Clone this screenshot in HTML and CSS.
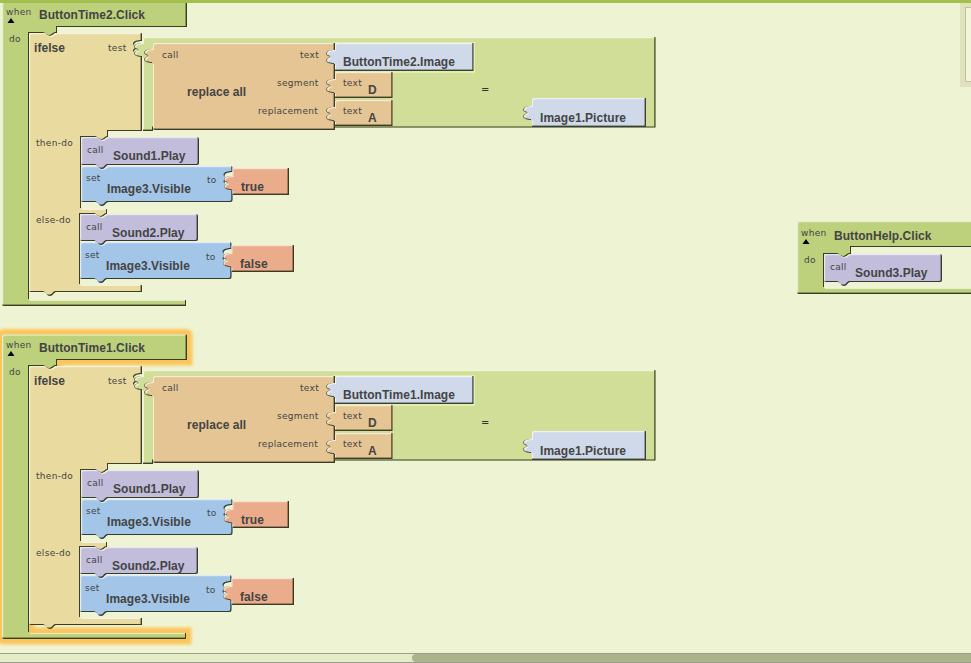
FILE: index.html
```html
<!DOCTYPE html>
<html lang="en">
<head>
<meta charset="utf-8">
<title>Blocks editor</title>
<link rel="stylesheet" href="styles.css">
</head>
<body>
<div class="page">
  <div class="topbar"></div>
  <div class="canvas">
    <svg class="workspace" viewBox="0 3 971 650" xmlns="http://www.w3.org/2000/svg">
      <defs>
        <filter id="bevel" x="-5%" y="-5%" width="110%" height="110%" color-interpolation-filters="sRGB">
          <feOffset in="SourceAlpha" dx="1.2" dy="1.2" result="downRight"/>
          <feComposite in="SourceAlpha" in2="downRight" operator="out" result="topEdge"/>
          <feFlood flood-color="#ffffff" flood-opacity="0.65"/>
          <feComposite in2="topEdge" operator="in" result="light"/>
          <feOffset in="SourceAlpha" dx="-1.4" dy="-1.4" result="upLeft"/>
          <feComposite in="SourceAlpha" in2="upLeft" operator="out" result="bottomEdge"/>
          <feFlood flood-color="#1f2410" flood-opacity="0.85"/>
          <feComposite in2="bottomEdge" operator="in" result="dark"/>
          <feMerge>
            <feMergeNode in="SourceGraphic"/>
            <feMergeNode in="light"/>
            <feMergeNode in="dark"/>
          </feMerge>
        </filter>
        <filter id="glow" x="-10%" y="-10%" width="120%" height="120%">
          <feGaussianBlur stdDeviation="1.6"/>
        </filter>

        <path id="when-outline" d="M2,4 q0,-2.5 2,-2.5 H186 q1,0 1,1 V27 H57 V33 H56 c-2,0 -3,3 -6,3 s-4,-3 -6,-3 H29 V300 H186 V306 H4 q-2,0 -2,-2 Z"/>
        <path id="socket" d="M0,0 v-2 c-3,0 -8,-1 -8,-3.5 c0,-2 2,-2.5 4,-3.5 c-2,-1 -4,-1.5 -4,-3.5 c0,-2.5 5,-3.5 8,-3.5 v-2 Z"/>

        <g id="stack">
          <use href="#when-outline" class="b-when"/>
          <path class="b-if" d="M29,35 q0,-2 2,-2 H44 c2,0 3,3 6,3 s4,-3 6,-3 H141 q1,0 1,1 V39 v2 c-3,0 -8,1 -8,3.5 c0,2 2,2.5 4,3.5 c-2,1 -4,1.5 -4,3.5 c0,2.5 5,3.5 8,3.5 v2 V131 H108 V137 c-2,0 -3,3 -6,3 s-4,-3 -6,-3 H81 V209 H107 V214 c-2,0 -3,3 -6,3 s-4,-3 -6,-3 H80 V285 H142 V292 H56 c-2,0 -3,4 -6,4 s-4,-4 -6,-4 H31 q-2,0 -2,-2 Z"/>
          <use href="#socket" class="socket" transform="translate(142 59)"/>
          <path class="b-eq" d="M145,37 H655.5 V127.5 H153 V131 H143 V59 v-2 c-3,0 -8,-1 -8,-3.5 c0,-2 2,-2.5 4,-3.5 c-2,-1 -4,-1.5 -4,-3.5 c0,-2.5 5,-3.5 8,-3.5 v-2 V39 q0,-2 2,-2 Z"/>
          <rect class="b-socketedge" x="333" y="42" width="142" height="31"/>
          <use href="#socket" class="socket" transform="translate(152 65)"/>
          <path class="b-text" d="M155,43 H335 V130 H155 q-2,0 -2,-2 V65 v-2 c-3,0 -8,-1 -8,-3.5 c0,-2 2,-2.5 4,-3.5 c-2,-1 -4,-1.5 -4,-3.5 c0,-2.5 5,-3.5 8,-3.5 v-2 V45 q0,-2 2,-2 Z"/>
          <use href="#socket" class="socket" transform="translate(334 66)"/>
          <path class="b-prop" d="M337,43 H473.5 V71 H335 V66 v-2 c-3,0 -8,-1 -8,-3.5 c0,-2 2,-2.5 4,-3.5 c-2,-1 -4,-1.5 -4,-3.5 c0,-2.5 5,-3.5 8,-3.5 v-2 V45 q0,-2 2,-2 Z"/>
          <use href="#socket" class="socket" transform="translate(334 95)"/>
          <path class="b-text" d="M337,72 H392.5 V98 H335 V95 v-2 c-3,0 -8,-1 -8,-3.5 c0,-2 2,-2.5 4,-3.5 c-2,-1 -4,-1.5 -4,-3.5 c0,-2.5 5,-3.5 8,-3.5 v-2 V74 q0,-2 2,-2 Z"/>
          <use href="#socket" class="socket" transform="translate(334 123)"/>
          <path class="b-text" d="M337,100 H392.5 V126 H335 V123 v-2 c-3,0 -8,-1 -8,-3.5 c0,-2 2,-2.5 4,-3.5 c-2,-1 -4,-1.5 -4,-3.5 c0,-2.5 5,-3.5 8,-3.5 v-2 V102 q0,-2 2,-2 Z"/>
          <use href="#socket" class="socket" transform="translate(531 122)"/>
          <path class="b-prop" d="M534,98 H646 V127 H532 V122 v-2 c-3,0 -8,-1 -8,-3.5 c0,-2 2,-2.5 4,-3.5 c-2,-1 -4,-1.5 -4,-3.5 c0,-2.5 5,-3.5 8,-3.5 v-2 V100 q0,-2 2,-2 Z"/>

          <path class="b-set" d="M83,166 H96 c2,0 3,3 6,3 s4,-3 6,-3 H230.5 q2,0 2,2 V170 v2 c-3,0 -8,1 -8,3.5 c0,2 2,2.5 4,3.5 c-2,1 -4,1.5 -4,3.5 c0,2.5 5,3.5 8,3.5 v2 V200 q0,2 -2,2 H108 c-2,0 -3,4 -6,4 s-4,-4 -6,-4 H83 q-2,0 -2,-2 V168 q0,-2 2,-2 Z"/>
          <path class="b-call" d="M83,137 H96 c2,0 3,3 6,3 s4,-3 6,-3 H197 q2,0 2,2 V163 q0,2 -2,2 H108 c-2,0 -3,4 -6,4 s-4,-4 -6,-4 H83 q-2,0 -2,-2 V139 q0,-2 2,-2 Z"/>
          <use href="#socket" class="socket" transform="translate(232 192)"/>
          <path class="b-bool" d="M232.5,168 H289 V195 H232.5 V192 v-2 c-3,0 -8,-1 -8,-3.5 c0,-2 2,-2.5 4,-3.5 c-2,-1 -4,-1.5 -4,-3.5 c0,-2.5 5,-3.5 8,-3.5 v-2 Z"/>

          <path class="b-set" d="M82,242 H95 c2,0 3,3 6,3 s4,-3 6,-3 H229.5 q2,0 2,2 V247 v2 c-3,0 -8,1 -8,3.5 c0,2 2,2.5 4,3.5 c-2,1 -4,1.5 -4,3.5 c0,2.5 5,3.5 8,3.5 v2 V277 q0,2 -2,2 H107 c-2,0 -3,4 -6,4 s-4,-4 -6,-4 H82 q-2,0 -2,-2 V244 q0,-2 2,-2 Z"/>
          <path class="b-call" d="M82,214 H95 c2,0 3,3 6,3 s4,-3 6,-3 H196 q2,0 2,2 V239 q0,2 -2,2 H107 c-2,0 -3,4 -6,4 s-4,-4 -6,-4 H82 q-2,0 -2,-2 V216 q0,-2 2,-2 Z"/>
          <use href="#socket" class="socket" transform="translate(231 269)"/>
          <path class="b-bool" d="M231.5,245 H294 V272 H231.5 V269 v-2 c-3,0 -8,-1 -8,-3.5 c0,-2 2,-2.5 4,-3.5 c-2,-1 -4,-1.5 -4,-3.5 c0,-2.5 5,-3.5 8,-3.5 v-2 Z"/>

          <path class="arrow" d="M11,18 L14.5,23 H7.5 Z"/>
        </g>
      </defs>

      <rect class="dock-shadow" x="960" y="3" width="14" height="84"/>
      <rect class="dock" x="965.5" y="7.5" width="10" height="74"/>

      <use href="#stack"/>
      <g class="t-small">
        <text x="6" y="15">when</text><text x="9" y="42">do</text>
        <text x="108" y="51">test</text><text x="162" y="58">call</text>
        <text x="300" y="58">text</text><text x="277" y="86">segment</text><text x="258" y="114">replacement</text>
        <text x="343" y="86">text</text><text x="343" y="114">text</text>
        <text class="t-eq" x="481" y="93">=</text>
        <text x="36" y="146">then-do</text><text x="36" y="223">else-do</text>
        <text x="87" y="153">call</text><text x="86" y="181">set</text><text x="207" y="183">to</text>
        <text x="86" y="230">call</text><text x="85" y="258">set</text><text x="206" y="260">to</text>
      </g>
      <g class="t-bold">
        <text x="39" y="19">ButtonTime2.Click</text><text x="34" y="52">ifelse</text>
        <text x="187" y="96">replace all</text><text x="343" y="66">ButtonTime2.Image</text>
        <text x="368" y="94">D</text><text x="368" y="122">A</text>
        <text x="540" y="122">Image1.Picture</text>
        <text x="113" y="160">Sound1.Play</text><text x="107" y="193">Image3.Visible</text><text x="241" y="191">true</text>
        <text x="112" y="237">Sound2.Play</text><text x="106" y="270">Image3.Visible</text><text x="240" y="268">false</text>
      </g>

      <g transform="translate(0 333)">
        <use href="#when-outline" class="halo"/>
        <use href="#stack"/>
        <g class="t-small">
          <text x="6" y="15">when</text><text x="9" y="42">do</text>
          <text x="108" y="51">test</text><text x="162" y="58">call</text>
          <text x="300" y="58">text</text><text x="277" y="86">segment</text><text x="258" y="114">replacement</text>
          <text x="343" y="86">text</text><text x="343" y="114">text</text>
          <text class="t-eq" x="481" y="93">=</text>
          <text x="36" y="146">then-do</text><text x="36" y="223">else-do</text>
          <text x="87" y="153">call</text><text x="86" y="181">set</text><text x="207" y="183">to</text>
          <text x="86" y="230">call</text><text x="85" y="258">set</text><text x="206" y="260">to</text>
        </g>
        <g class="t-bold">
          <text x="39" y="19">ButtonTime1.Click</text><text x="34" y="52">ifelse</text>
          <text x="187" y="96">replace all</text><text x="343" y="66">ButtonTime1.Image</text>
          <text x="368" y="94">D</text><text x="368" y="122">A</text>
          <text x="540" y="122">Image1.Picture</text>
          <text x="113" y="160">Sound1.Play</text><text x="107" y="193">Image3.Visible</text><text x="241" y="191">true</text>
          <text x="112" y="237">Sound2.Play</text><text x="106" y="270">Image3.Visible</text><text x="240" y="268">false</text>
        </g>
      </g>

      <path class="b-when" d="M799,221 H978 V247 H851 V254 H850 c-2,0 -3,3 -6,3 s-4,-3 -6,-3 H824 V288 H978 V294 H799 q-2,0 -2,-2 V223 q0,-2 2,-2 Z"/>
      <path class="b-call" d="M826,254 H838 c2,0 3,3 6,3 s4,-3 6,-3 H940 q2,0 2,2 V280 q0,2 -2,2 H850 c-2,0 -3,4 -6,4 s-4,-4 -6,-4 H826 q-2,0 -2,-2 V256 q0,-2 2,-2 Z"/>
      <path class="arrow" d="M806,239 L809.5,244 H802.5 Z"/>
      <g class="t-small">
        <text x="801" y="236">when</text><text x="804" y="263">do</text><text x="830" y="270">call</text>
      </g>
      <g class="t-bold">
        <text x="834" y="240">ButtonHelp.Click</text><text x="855" y="277">Sound3.Play</text>
      </g>
    </svg>
  </div>
  <div class="hscroll"><div class="hthumb"></div></div>
</div>
</body>
</html>
```

FILE: styles.css
```css
html, body {
  margin: 0;
  padding: 0;
  height: 100%;
  overflow: hidden;
  background: #eef4d3;
}

.page {
  display: flex;
  flex-direction: column;
  width: 971px;
  height: 663px;
}

.topbar {
  flex: 0 0 3px;
  background: #a3bf4d;
}

.canvas {
  flex: 1 1 auto;
  min-height: 0;
  background: #eef4d3;
}

.workspace {
  display: block;
  width: 971px;
  height: 650px;
}

.hscroll {
  flex: 0 0 10px;
  box-sizing: border-box;
  display: flex;
  justify-content: flex-end;
  border-top: 1px solid #9a9f8c;
  border-bottom: 1px solid #9a9f8c;
  background: #e4edc6;
}

.hthumb {
  width: 559px;
  border-radius: 4px 0 0 4px;
  background: #a9b48a;
}

.b-when, .b-if, .b-eq, .b-text, .b-prop, .b-call, .b-set, .b-bool {
  filter: url(#bevel);
}

.b-when { fill: #bdd07c; }
.b-if { fill: #e9da9f; }
.b-eq { fill: #d1de98; }
.b-text { fill: #e5c594; }
.b-prop { fill: #cfd9ea; }
.b-call { fill: #c1bddb; }
.b-set { fill: #a3c5e8; }
.b-bool { fill: #eaac8b; }
.b-socketedge { fill: #e3efac; }
.socket { fill: #4e4f33; opacity: 0.75; }

.halo {
  fill: #fcc55c;
  stroke: #fcc55c;
  stroke-width: 11px;
  filter: url(#glow);
}

.arrow { fill: #000; }

.dock-shadow { fill: #dfe3bd; }
.dock { fill: #f2f5dc; stroke: #c4c391; stroke-width: 1px; }

.t-small text {
  font-family: "DejaVu Sans", sans-serif;
  font-size: 9px;
  letter-spacing: 0.3px;
  fill: #444;
}

.t-small .t-eq {
  font-size: 10px;
  fill: #333;
}

.t-bold text {
  font-family: "Liberation Sans", Arial, sans-serif;
  font-size: 12px;
  font-weight: 700;
  letter-spacing: 0.05px;
  fill: #444;
}
```
